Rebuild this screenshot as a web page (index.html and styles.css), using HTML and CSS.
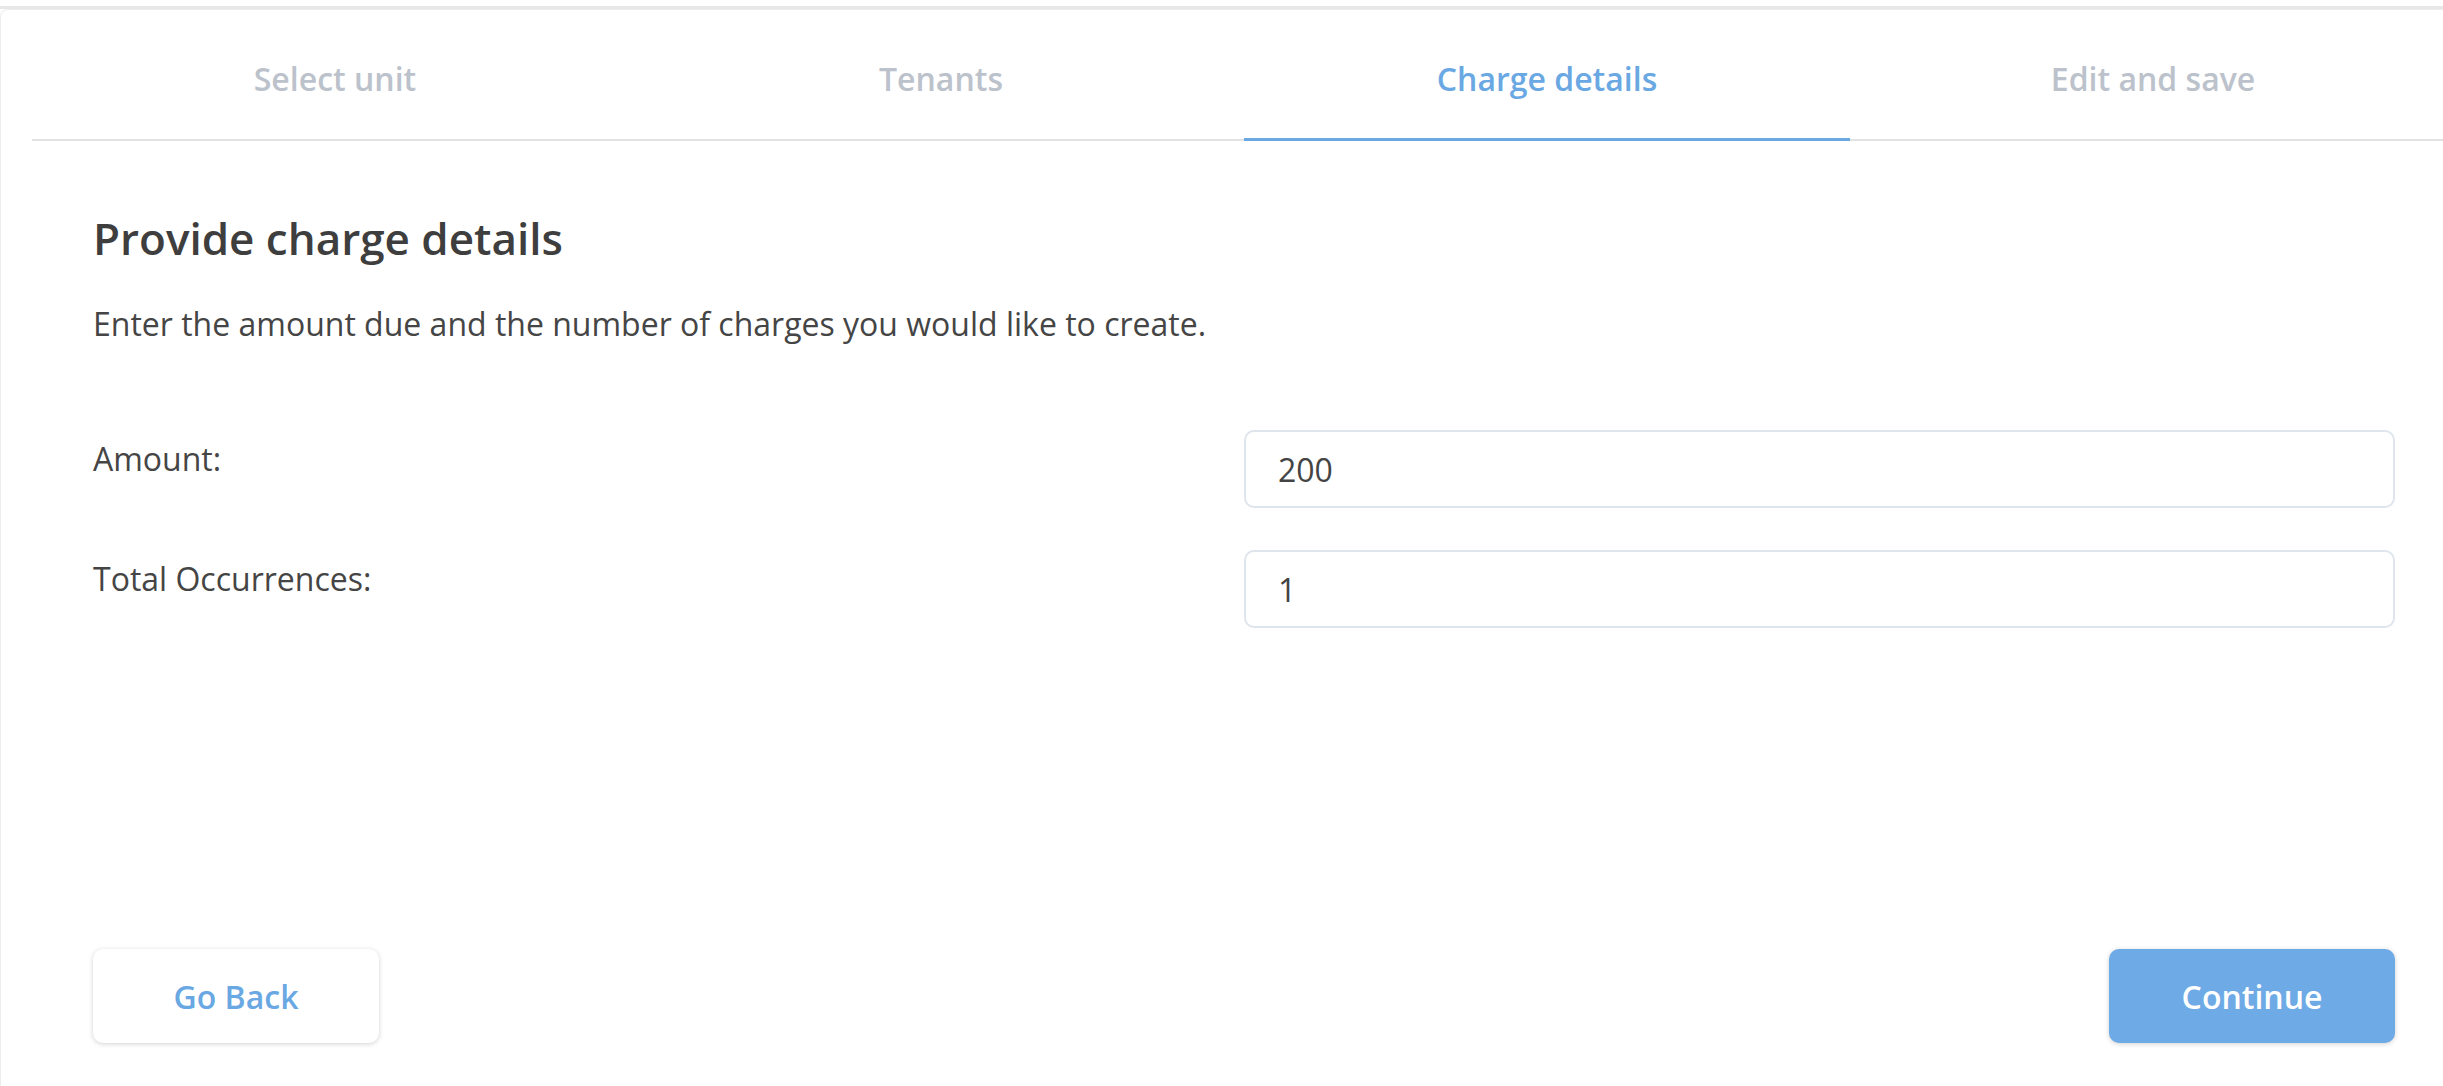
FILE: index.html
```html
<!DOCTYPE html>
<html lang="en">
<head>
<meta charset="utf-8">
<title>Charge details</title>
<link rel="stylesheet" href="styles.css">
</head>
<body>
<div class="page">
  <div class="card">
    <nav class="tabs">
      <div class="tab">Select unit</div>
      <div class="tab">Tenants</div>
      <div class="tab tab-active">Charge details</div>
      <div class="tab">Edit and save</div>
    </nav>
    <section class="content">
      <h1 class="title">Provide charge details</h1>
      <p class="lead">Enter the amount due and the number of charges you would like to create.</p>
      <div class="form">
        <div class="row">
          <label class="label" for="amount">Amount:</label>
          <input class="field" id="amount" type="text" value="200">
        </div>
        <div class="row">
          <label class="label" for="occ">Total Occurrences:</label>
          <input class="field" id="occ" type="text" value="1">
        </div>
      </div>
      <div class="actions">
        <button class="btn btn-back" type="button">Go Back</button>
        <button class="btn btn-continue" type="button">Continue</button>
      </div>
    </section>
  </div>
</div>
</body>
</html>
```

FILE: styles.css
```css
html, body {
  margin: 0;
  padding: 0;
  background: #ffffff;
  overflow: hidden;
}

body {
  font-family: "Open Sans", "Noto Sans", sans-serif;
  color: #444444;
  padding-top: 6px;
}

.page {
  border-top: 3px solid #e7e7e7;
  width: 2488px;
}

.card {
  border: 1px solid #ededed;
  border-bottom: none;
  border-radius: 8px 8px 0 0;
  height: 1100px;
  box-sizing: border-box;
}

.tabs {
  display: flex;
  margin: 0 31px;
  border-bottom: 2px solid #e2e2e2;
}

.tab {
  flex: 1 1 0;
  height: 129px;
  box-sizing: border-box;
  padding-top: 8px;
  display: flex;
  align-items: center;
  justify-content: center;
  font-size: 32px;
  font-weight: 600;
  color: #bcc2cb;
  position: relative;
}

.tab-active {
  color: #6aa8e3;
}

.tab-active::after {
  content: "";
  position: absolute;
  left: 0;
  right: 0;
  bottom: -2px;
  height: 3px;
  background: #6aa8e3;
}

.content {
  padding: 71px 92px 0 92px;
  display: flex;
  flex-direction: column;
}

.title {
  margin: 0;
  font-size: 44px;
  line-height: 52px;
  font-weight: 600;
  color: #3e3e3e;
}

.lead {
  margin: 38px 0 0 0;
  font-size: 32px;
  line-height: 44px;
  color: #454545;
}

.form {
  margin-top: 84px;
  display: flex;
  flex-direction: column;
  gap: 42px;
}

.row {
  display: grid;
  grid-template-columns: 1fr 1fr;
  align-items: start;
}

.label {
  font-size: 32px;
  line-height: 40px;
  padding-top: 9px;
  color: #454545;
}

.field {
  height: 78px;
  box-sizing: border-box;
  border: 2px solid #dfe5ec;
  border-radius: 10px;
  padding: 0 32px;
  font-family: "Open Sans", "Noto Sans", sans-serif;
  font-size: 32px;
  color: #444444;
  background: #ffffff;
  outline: none;
  width: 100%;
}

.actions {
  margin-top: 321px;
  display: flex;
  justify-content: space-between;
}

.btn {
  width: 286px;
  height: 94px;
  border: none;
  border-radius: 10px;
  font-family: "Open Sans", "Noto Sans", sans-serif;
  font-size: 32px;
  font-weight: 600;
  box-shadow: 0 1px 5px rgba(0, 0, 0, 0.18);
  cursor: pointer;
}

.btn-back {
  background: #ffffff;
  color: #6aa8e3;
}

.btn-continue {
  background: #6eaae5;
  color: #ffffff;
}
```
